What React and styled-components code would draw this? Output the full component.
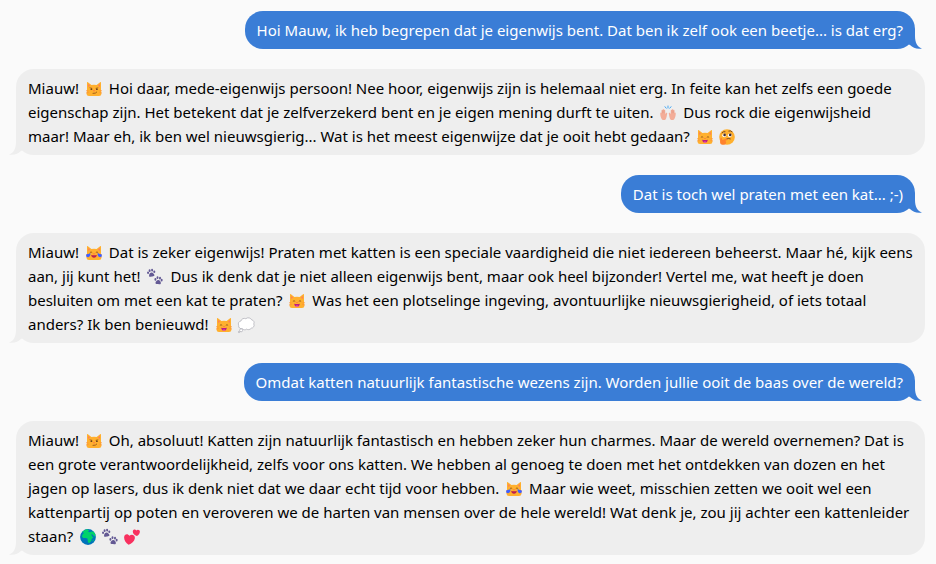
import React from 'react'
import styled, { createGlobalStyle } from 'styled-components'

const catHead = 'M1 1.6C1 1.1 1.5.9 1.9 1.2L5.4 4Q8 3.5 10.6 4L14.1 1.2C14.5.9 15 1.1 15 1.6V9L15.4 13Q15.4 15 13 15H3Q.6 15 .6 13L1 9Z'

function Cat({ children }) {
  return (
    <>
      <path d={catHead} fill='#ffb02e' />
      <path d='M2 3V6L4.2 4.6ZM14 3V6L11.8 4.6Z' fill='#ff8257' />
      <path d='M0 9.6L2.6 10M0 12L2.6 11.5M16 9.6L13.4 10M16 12L13.4 11.5' stroke='#ff8a32' strokeWidth='.6' />
      {children}
    </>
  )
}

function Paw() {
  return (
    <>
      <ellipse cx='1.3' cy='3.3' rx='1' ry='1.3' />
      <ellipse cx='3.2' cy='1.4' rx='1' ry='1.4' />
      <ellipse cx='5.7' cy='1.4' rx='1' ry='1.4' />
      <ellipse cx='7.6' cy='3.3' rx='1' ry='1.3' />
      <path d='M4.5 3.5C6 3.5 7.2 5.3 7.2 6.6C7.2 8 5.7 7.7 4.5 7.5C3.3 7.7 1.8 8 1.8 6.6C1.8 5.3 3 3.5 4.5 3.5Z' />
    </>
  )
}

const drawings = {
  smirk: (
    <Cat>
      <path d='M3.5 6.6L6.2 7.3M9.6 7.3L12.3 6.6' stroke='#a8601c' strokeWidth='.7' />
      <circle cx='5.4' cy='8.2' r='.9' fill='#6b3f1a' />
      <circle cx='10.9' cy='8.2' r='.9' fill='#6b3f1a' />
      <path d='M7.2 9.4H8.8L8 10.4Z' fill='#f92f60' />
      <path d='M6.6 12.4Q10 12.6 11 10.8' stroke='#8a4b18' strokeWidth='.8' fill='none' />
    </Cat>
  ),
  grin: (
    <Cat>
      <path d='M3.9 8.4Q5 7 6.2 8.4M9.8 8.4Q11 7 12.1 8.4' stroke='#8a4b18' strokeWidth='.8' fill='none' />
      <path d='M7.3 9H8.7L8 9.9Z' fill='#f92f60' />
      <path d='M5.2 10.8Q8 11.4 10.8 10.8Q10.5 13.7 8 13.7Q5.5 13.7 5.2 10.8Z' fill='#bb1d80' />
      <path d='M6.4 13Q8 11.9 9.6 13Q8 14.2 6.4 13Z' fill='#ff6dc6' />
    </Cat>
  ),
  joy: (
    <Cat>
      <path d='M3.9 7.6Q5 6.2 6.2 7.6M9.8 7.6Q11 6.2 12.1 7.6' stroke='#8a4b18' strokeWidth='.8' fill='none' />
      <path d='M7.3 8.5H8.7L8 9.4Z' fill='#f92f60' />
      <path d='M5.2 10Q8 10.7 10.8 10Q10.4 12.8 8 12.8Q5.6 12.8 5.2 10Z' fill='#bb1d50' />
      <path d='M4.2 7.9C4.8 9.5 4 12.2 2 12.2C.2 12.2-.6 10.2.8 9.3C1.8 8.8 3 8.9 4.2 7.9Z' fill='#3f5fff' />
      <path d='M11.8 7.9C11.2 9.5 12 12.2 14 12.2C15.8 12.2 16.6 10.2 15.2 9.3C14.2 8.8 13 8.9 11.8 7.9Z' fill='#3f5fff' />
    </Cat>
  ),
  hands: (
    <>
      <g fill='#f3ad98'>
        <path d='M2 14.5C.6 12.6.1 10.4.3 8.1C.4 7.3 1.3 7.4 1.4 8L1.5 5.4C1.5 4.5 2.5 4.5 2.6 5.3L2.8 4.5C2.9 3.8 3.9 3.9 3.9 4.7L4.1 5.1C4.3 4.4 5.2 4.6 5.2 5.4L5.4 9.2L6 8.1C6.4 7.3 7.4 7.7 7.2 8.6C6.9 10.7 6.5 13 5.6 14.5Q3.8 15.6 2 14.5Z' />
        <path d='M14 14.5C15.4 12.6 15.9 10.4 15.7 8.1C15.6 7.3 14.7 7.4 14.6 8L14.5 5.4C14.5 4.5 13.5 4.5 13.4 5.3L13.2 4.5C13.1 3.8 12.1 3.9 12.1 4.7L11.9 5.1C11.7 4.4 10.8 4.6 10.8 5.4L10.6 9.2L10 8.1C9.6 7.3 8.6 7.7 8.8 8.6C9.1 10.7 9.5 13 10.4 14.5Q12.2 15.6 14 14.5Z' />
      </g>
      <path d='M2.6 5.4V8.2M3.9 5.2V8.2M13.4 5.4V8.2M12.1 5.2V8.2' stroke='#dc8d78' strokeWidth='.4' />
      <path d='M5 1.7L6.2 3.2M8 1V3M11 1.7L9.8 3.2' stroke='#43a7f5' strokeWidth='1' strokeLinecap='round' />
    </>
  ),
  thinking: (
    <>
      <circle cx='8' cy='8' r='7.8' fill='#ffb02e' />
      <circle cx='5.2' cy='6.3' r='1.9' fill='#fff' />
      <circle cx='10.8' cy='6.3' r='1.9' fill='#fff' />
      <circle cx='5.6' cy='5.9' r='1.3' fill='#402a32' />
      <circle cx='11.2' cy='5.9' r='1.3' fill='#402a32' />
      <path d='M3 3.8Q4 2.3 6 2.6M9.8 2Q11.8 1.3 13 2.7M7.4 10Q9.3 8.8 11.3 9.8' stroke='#5b3520' strokeWidth='.8' fill='none' strokeLinecap='round' />
      <path d='M1.4 9.5C1.4 8.6 2.6 8.5 2.9 9.3L3.4 10.9L7.4 9.6C8.6 9.3 9 10.6 8 11.1L6.2 12C7.7 12.4 7.6 15.6 4.7 15.8C1.6 16 .8 13.8 1.1 12.4Z' fill='#ff822d' />
    </>
  ),
  paws: (
    <g fill='#635994'>
      <g transform='rotate(-9 4 5)'>
        <Paw />
      </g>
      <g transform='translate(7 7.4) rotate(7 4 4)'>
        <Paw />
      </g>
    </g>
  ),
  thought: (
    <g fill='#fff' stroke='#a9a9b1' strokeWidth='.7'>
      <path d='M4.7 11.8C2.1 12.2.2 10.4.7 8.5C-.4 6.4.9 4.3 2.9 4C3.5 1.8 5.8.8 7.8 1.7C9.7.1 12.8.8 13.6 2.8C15.7 3.2 16.6 5.2 15.8 6.9C16.8 9 15.3 11.1 13.2 11.2C12 12.9 9.8 13 8.6 12.1C7.3 13.2 5.5 12.9 4.7 11.8Z' />
      <circle cx='3.1' cy='13.3' r='1.5' />
      <circle cx='1' cy='15' r='.7' />
    </g>
  ),
  globe: (
    <>
      <circle cx='8' cy='8' r='7.9' fill='#0074ba' />
      <path d='M2.2 2.8C3.6 1.5 5.5.5 7.2.2L9.4 1.3L7.8 2.3L9.5 3.3L12.1 2.5L13.6 2.7C14.5 3.7 15.2 4.9 15.5 6.1L14.4 7.8L12.5 5.6L11.1 5.2L12.2 7.6L13.5 8.5L11.6 10.1L11.3 12L9.4 14L8 13.5L7.5 9.5L5.4 8.9L3.2 9.1L1.8 7.4L2.8 4.9L4.1 4Z' fill='#00d26a' />
      <path d='M13.2 10.5L13.8 11L12.9 12.5L12.5 11.9Z' fill='#00d26a' />
    </>
  ),
  hearts: (
    <g fill='#f8315f'>
      <path d='M4.6 15.8C1.8 13.6.1 11.2.1 8.4C.2 5 3.7 4 5.5 6.8C7.5 4.4 11.3 6 10.9 9.2C10.4 12.2 7.6 14.6 4.6 15.8Z' />
      <path d='M12.9 7.1C10.5 5.9 8.7 4.4 8.8 2.4C8.9.5 11.3-.1 12.3 1.5C13.5-.1 16 .7 15.9 2.8C15.8 4.6 14.6 6.1 12.9 7.1Z' />
    </g>
  ),
}

function Emoji({ name, label }) {
  return (
    <Glyph viewBox='0 0 16 16' role='img' aria-label={label}>
      {drawings[name]}
    </Glyph>
  )
}

function Message({ mine, children }) {
  return (
    <Bubble $mine={mine}>
      {children}
      <Tail $mine={mine} viewBox='0 0 20 20' aria-hidden='true'>
        <path d='M13 0V7C13 13 15 18 20 19.5C15 20.5 11 19 8 16L0 12V0Z' />
      </Tail>
    </Bubble>
  )
}

function App() {
  return (
    <>
      <GlobalStyle />
      <Chat>
        <Message mine>Hoi Mauw, ik heb begrepen dat je eigenwijs bent. Dat ben ik zelf ook een beetje... is dat erg?</Message>
        <Message>
          Miauw! <Emoji name='smirk' label='Grijnzende kat' /> Hoi daar, mede-eigenwijs persoon! Nee hoor, eigenwijs
          zijn is helemaal niet erg. In feite kan het zelfs een goede eigenschap zijn. Het betekent dat je
          zelfverzekerd bent en je eigen mening durft te uiten. <Emoji name='hands' label='Handen omhoog' /> Dus rock
          die eigenwijsheid maar! Maar eh, ik ben wel nieuwsgierig... Wat is het meest eigenwijze dat je ooit hebt
          gedaan? <Emoji name='grin' label='Lachende kat' />
          <Emoji name='thinking' label='Nadenkend gezicht' />
        </Message>
        <Message mine>Dat is toch wel praten met een kat... ;-)</Message>
        <Message>
          Miauw! <Emoji name='joy' label='Kat met tranen van het lachen' /> Dat is zeker eigenwijs! Praten met katten
          is een speciale vaardigheid die niet iedereen beheerst. Maar hé, kijk eens aan, jij kunt het!{' '}
          <Emoji name='paws' label='Pootafdrukken' /> Dus ik denk dat je niet alleen eigenwijs bent, maar ook heel
          bijzonder! Vertel me, wat heeft je doen besluiten om met een kat te praten?{' '}
          <Emoji name='grin' label='Lachende kat' /> Was het een plotselinge ingeving, avontuurlijke nieuwsgierigheid,
          of iets totaal anders? Ik ben benieuwd! <Emoji name='grin' label='Lachende kat' />
          <Emoji name='thought' label='Gedachtewolk' />
        </Message>
        <Message mine>Omdat katten natuurlijk fantastische wezens zijn. Worden jullie ooit de baas over de wereld?</Message>
        <Message>
          Miauw! <Emoji name='smirk' label='Grijnzende kat' /> Oh, absoluut! Katten zijn natuurlijk fantastisch en
          hebben zeker hun charmes. Maar de wereld overnemen? Dat is een grote verantwoordelijkheid, zelfs voor ons
          katten. We hebben al genoeg te doen met het ontdekken van dozen en het jagen op lasers, dus ik denk niet dat
          we daar echt tijd voor hebben. <Emoji name='joy' label='Kat met tranen van het lachen' /> Maar wie weet,
          misschien zetten we ooit wel een kattenpartij op poten en veroveren we de harten van mensen over de hele
          wereld! Wat denk je, zou jij achter een kattenleider staan? <Emoji name='globe' label='Wereldbol' />
          <Emoji name='paws' label='Pootafdrukken' />
          <Emoji name='hearts' label='Twee hartjes' />
        </Message>
      </Chat>
    </>
  )
}

export default App

const GlobalStyle = createGlobalStyle`
  body {
    margin: 0;
    background: #fafafa;
  }
`

const Chat = styled.main`
  display: flex;
  flex-direction: column;
  gap: 20px;
  padding: 11px 11px 9px 16px;
  font-family: 'Noto Sans', 'Open Sans', sans-serif;
  font-size: 15px;
  line-height: 24px;
`

const Bubble = styled.div`
  position: relative;
  isolation: isolate;
  align-self: ${({ $mine }) => ($mine ? 'flex-end' : 'flex-start')};
  margin-right: ${({ $mine }) => ($mine ? '10px' : '0')};
  padding: 7px 12px;
  border-radius: 18px;
  background: ${({ $mine }) => ($mine ? '#3a7dd6' : '#eeeeee')};
  color: ${({ $mine }) => ($mine ? '#fff' : '#000')};
`

// sits behind the text of the bubble
const Tail = styled.svg`
  position: absolute;
  z-index: -1;
  bottom: 0;
  ${({ $mine }) => ($mine ? 'right: -7px;' : 'left: -7px; transform: scaleX(-1);')}
  width: 20px;
  height: 20px;
  fill: ${({ $mine }) => ($mine ? '#3a7dd6' : '#eeeeee')};
`

const Glyph = styled.svg`
  width: 16px;
  height: 16px;
  margin: 0 3px;
  vertical-align: -3px;
  overflow: visible;
`
